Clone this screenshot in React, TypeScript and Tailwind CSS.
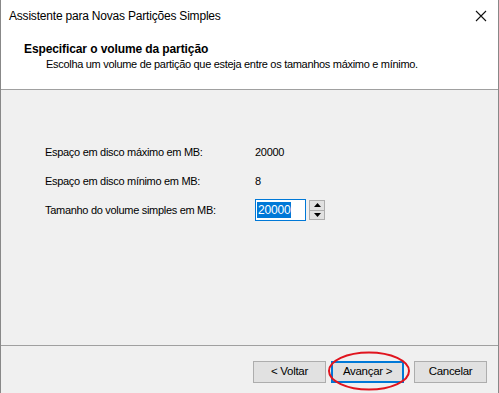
import React from 'react';

const font = { fontFamily: '"Liberation Sans", Arial, sans-serif' };

const Row = ({ label, children }: { label: string; children: React.ReactNode }) => (
  <div className="flex items-center h-[22px]">
    <span className="w-[210px]">{label}</span>
    {children}
  </div>
);

const WinButton = ({ children, focused }: { children: React.ReactNode; focused?: boolean }) => (
  <button
    className={
      'w-[73px] h-[22px] bg-[#e1e1e1] text-[11.5px] tracking-[-0.3px] text-black flex items-center justify-center ' +
      (focused ? 'border-2 border-[#0078d7]' : 'border border-[#adadad]')
    }
  >
    {children}
  </button>
);

export default function App() {
  return (
    <div className="w-[499px] h-[393px] bg-white text-black text-[11px] tracking-[-0.3px] flex flex-col border-l border-r border-[#888888] relative overflow-hidden" style={font}>
      {/* title bar */}
      <div className="h-[32px] flex items-center justify-between pl-[8px] pr-[10px] shrink-0">
        <span className="text-[12px] tracking-[-0.2px]">Assistente para Novas Partições Simples</span>
        <svg width="12" height="12" viewBox="0 0 12 12" className="mr-[1px]">
          <path d="M1 1 L11 11 M11 1 L1 11" stroke="#111" strokeWidth="1.1" />
        </svg>
      </div>

      {/* header */}
      <div className="h-[58px] shrink-0 bg-white border-b border-[#a0a0a0] pl-[23px] pt-[9px]">
        <div className="font-bold leading-[16px] text-[12px] tracking-[-0.1px]">Especificar o volume da partição</div>
        <div className="pl-[22px] leading-[15px]">Escolha um volume de partição que esteja entre os tamanhos máximo e mínimo.</div>
      </div>

      {/* body */}
      <div className="flex-1 bg-[#f0f0f0] border-b border-[#a0a0a0] pl-[44px] pt-[51px] flex flex-col gap-[7px]">
        <Row label="Espaço em disco máximo em MB:">
          <span>20000</span>
        </Row>
        <Row label="Espaço em disco mínimo em MB:">
          <span>8</span>
        </Row>
        <Row label="Tamanho do volume simples em MB:">
          <div className="flex items-center gap-[3px]">
            <div className="w-[51px] h-[22px] bg-white border border-[#0078d7] flex items-center pl-[1px]">
              <span className="bg-[#0078d7] text-white leading-[16px] px-[1px] text-[12px] tracking-[-0.2px]">20000</span>
            </div>
            <div className="w-[16px] h-[20px] flex flex-col border border-[#adadad] bg-[#e1e1e1]">
              <div className="flex-1 flex items-center justify-center border-b border-[#adadad]">
                <svg width="7" height="4" viewBox="0 0 7 4"><path d="M3.5 0 L7 4 L0 4 Z" fill="#000" /></svg>
              </div>
              <div className="flex-1 flex items-center justify-center">
                <svg width="7" height="4" viewBox="0 0 7 4"><path d="M0 0 L7 0 L3.5 4 Z" fill="#000" /></svg>
              </div>
            </div>
          </div>
        </Row>
      </div>

      {/* buttons */}
      <div className="h-[47px] shrink-0 bg-[#f0f0f0] flex items-start pt-[15px] pr-[11px] justify-end">
        <div className="flex gap-[5px]">
          <WinButton>&lt; Voltar</WinButton>
          <WinButton focused>Avançar &gt;</WinButton>
        </div>
        <div className="ml-[10px]">
          <WinButton>Cancelar</WinButton>
        </div>
      </div>

      {/* red highlight mark */}
      <svg className="absolute left-[325px] top-[350px] pointer-events-none" width="86" height="42" viewBox="0 0 86 42">
        <ellipse cx="43" cy="21" rx="40" ry="18.5" fill="none" stroke="#e0141e" strokeWidth="2" />
      </svg>
    </div>
  );
}
